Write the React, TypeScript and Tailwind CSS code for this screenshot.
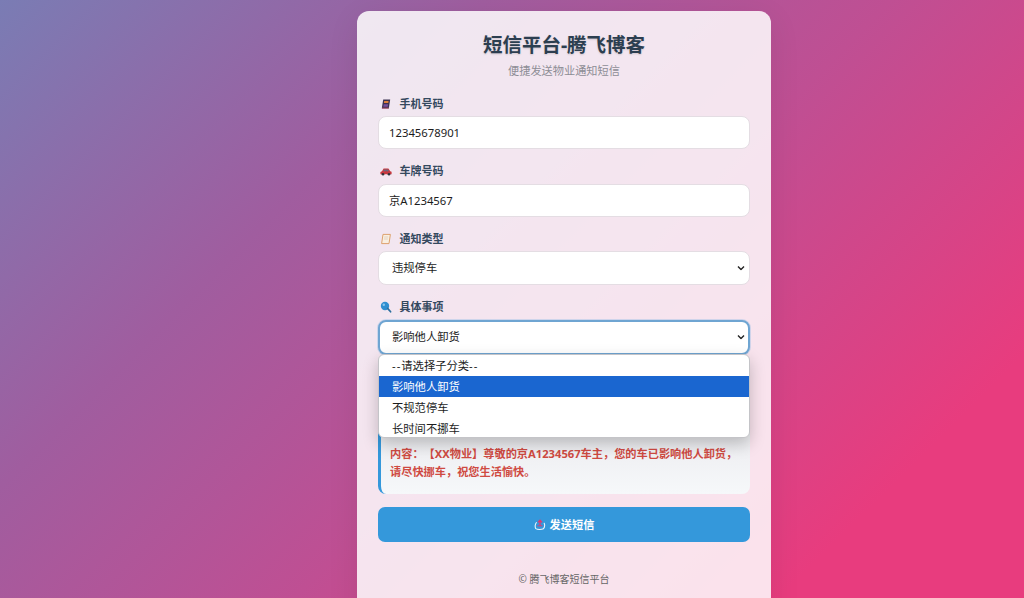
import { type ReactNode } from 'react';

function BookIcon() {
  return (
    <svg viewBox="0 0 12 12" className="w-3 h-3">
      <path d="M3.2 1.5h7l-1.4 9h-7z" fill="#3d3350" />
      <path d="M4.2 3h4.4l-.3 2H3.9z" fill="#e0813a" />
      <path d="M3.7 6.2h4.4l-.4 2.6H3.3z" fill="#7a4fa0" />
      <path d="M2 10.2h6.8" stroke="#c9566f" strokeWidth="0.8" />
    </svg>
  );
}

function CarIcon() {
  return (
    <svg viewBox="0 0 12 12" className="w-3 h-3">
      <path d="M.4 7 2 6.2l1.6-2.6h4.8l1.8 2.6 1.4.6v2.4H.4z" fill="#c8383f" />
      <path d="M4.2 4.4h1.5v1.8H3.2zM6.3 4.4h1.6l1 1.8H6.3z" fill="#5b6f8a" />
      <circle cx="3" cy="9.2" r="1.3" fill="#30343c" />
      <circle cx="9" cy="9.2" r="1.3" fill="#30343c" />
    </svg>
  );
}

function MemoIcon() {
  return (
    <svg viewBox="0 0 12 12" className="w-3 h-3">
      <path d="M3 1.4h7.4L9 10.6H1.6z" fill="#f9efe0" stroke="#dda26e" strokeWidth="1" strokeLinejoin="round" />
      <path d="M4.2 4h4M3.9 6h4" stroke="#d9c6b4" strokeWidth="0.7" />
    </svg>
  );
}

function SearchIcon() {
  return (
    <svg viewBox="0 0 12 12" className="w-3 h-3">
      <circle cx="5" cy="5" r="4.2" fill="#2f8fd0" />
      <circle cx="3.8" cy="3.8" r="1.2" fill="#8cc8ee" />
      <path d="M7.6 7.4 10.6 10.8" stroke="#2c6f9e" strokeWidth="1.7" strokeLinecap="round" />
    </svg>
  );
}

function SendIcon() {
  return (
    <svg viewBox="0 0 12 12" className="w-3 h-3">
      <path d="M2.4 3.6C1 5 .8 8 1.8 9.6c1.6 1.2 5.6 1.2 7.6.2 1.2-1.4 1.4-4 .8-5.6" fill="none" stroke="#eaf4fb" strokeWidth="1.1" strokeLinecap="round" />
      <path d="M6 6.6V2M4 3.4 6 1.2l2 2.2" fill="none" stroke="#e2386f" strokeWidth="1.3" />
      <path d="M3.4 6.8h5" stroke="#e2386f" strokeWidth="1" />
    </svg>
  );
}

function Chevron() {
  return (
    <svg viewBox="0 0 8 5" className="absolute right-[5px] top-1/2 -translate-y-1/2 w-[8px] h-[5px] pointer-events-none">
      <path d="M1 1l3 3 3-3" fill="none" stroke="#222" strokeWidth="1.4" />
    </svg>
  );
}

function Field({ icon, label, children }: { icon: ReactNode; label: string; children: ReactNode }) {
  return (
    <div className="mb-[14px]">
      <div className="flex items-center gap-[7.5px] h-[16px] mb-[4.5px] pl-[2px] text-[11px] leading-[16px] font-bold text-[#34495e]">
        {icon}
        {label}
      </div>
      {children}
    </div>
  );
}

const baseField = 'block w-full bg-white rounded-[8px] text-[11.3px] text-[#1c1c1c] outline-none';

export default function App() {
  return (
    <div
      className="h-screen overflow-hidden flex pl-[357px] bg-[linear-gradient(135deg,#7a7cb4_0%,#a05d9f_30%,#bf4f93_55%,#e83c7e_85%)]"
      style={{ fontFamily: '"Noto Sans", "Noto Sans CJK SC", sans-serif' }}
    >
      <div className="w-[414px] h-[640px] mt-[11px] shrink-0 rounded-[12px] bg-white/85 px-[21px] pt-[20px] shadow-[0_8px_32px_rgba(0,0,0,0.08)]">
        <h1 className="text-center text-[19.5px] leading-[28px] font-bold text-[#2c3e50] [text-shadow:0_1px_2px_rgba(0,0,0,0.15)]">
          短信平台-腾飞博客
        </h1>
        <p className="text-center text-[11.2px] leading-[16px] mt-[4px] mb-[16.5px] text-[#8d8d95]">便捷发送物业通知短信</p>

        <Field icon={<BookIcon />} label="手机号码">
          <input className={`${baseField} h-[33px] px-[10px] border border-[#e4dde3]`} defaultValue="12345678901" />
        </Field>
        <Field icon={<CarIcon />} label="车牌号码">
          <input className={`${baseField} h-[33px] px-[10px] border border-[#e4dde3]`} defaultValue="京A1234567" />
        </Field>
        <Field icon={<MemoIcon />} label="通知类型">
          <div className="relative">
            <select className={`${baseField} appearance-none h-[34px] px-[13px] border border-[#e4dde3]`} defaultValue="违规停车">
              <option>违规停车</option>
            </select>
            <Chevron />
          </div>
        </Field>

        <div className="relative">
          <Field icon={<SearchIcon />} label="具体事项">
            <div className="relative">
              <select
                className={`${baseField} appearance-none h-[35px] px-[12px] border-2 border-[#6fa5d2] shadow-[0_0_0_1px_rgba(52,152,219,0.2)]`}
                defaultValue="影响他人卸货"
              >
                <option>影响他人卸货</option>
              </select>
              <Chevron />
            </div>
          </Field>

          {/* open select list */}
          <div className="absolute left-0 right-0 top-[55px] z-10 h-[84px] bg-white rounded-[6px] border border-[#c4c4c8] overflow-hidden text-[11.3px] leading-[21px] text-[#1c1c1c] shadow-[0_6px_16px_rgba(0,0,0,0.22)]">
            <div className="h-[21px] pl-[13px]">
              <span className="tracking-[1px]">--</span>请选择子分类<span className="tracking-[1px]">--</span>
            </div>
            <div className="h-[21px] pl-[13px] bg-[#1a66d0] text-white">影响他人卸货</div>
            <div className="h-[21px] pl-[13px]">不规范停车</div>
            <div className="h-[20px] pl-[13px]">长时间不挪车</div>
          </div>
        </div>

        <div className="h-[125.5px] pt-[76px] pl-[9px] pr-[10px] border-l-[3px] border-[#3498db] rounded-[8px] bg-[linear-gradient(180deg,#e2e0e5,#f6f8fa)] text-[11.2px] leading-[18px] font-bold text-[#cf4a42] [text-spacing-trim:space-all]">
          内容：【XX物业】尊敬的京A1234567车主，您的车已影响他人卸货，请尽快挪车，祝您生活愉快。
        </div>

        <button className="mt-[13px] w-full h-[35px] pt-px flex items-center justify-center gap-[4px] rounded-[7px] bg-[#3498db] text-white text-[11.2px] font-bold">
          <SendIcon />
          发送短信
        </button>

        <p className="mt-[30px] text-center text-[10px] leading-[15px] text-[#666]">© 腾飞博客短信平台</p>
      </div>
    </div>
  );
}
